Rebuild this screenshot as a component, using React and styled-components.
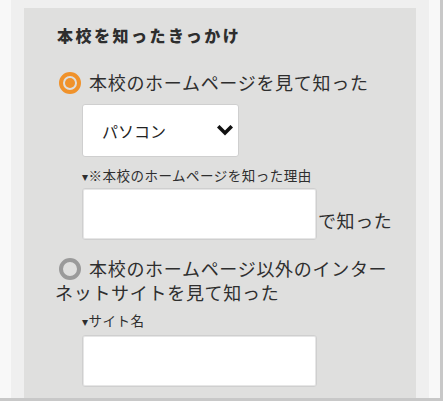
import styled, { createGlobalStyle } from 'styled-components';

const GlobalStyle = createGlobalStyle`
    body {
        margin: 0;
        background: #ffffff;
        font-family: "Noto Sans CJK JP", "Noto Sans", sans-serif;
        color: #333333;
    }
`;

const Sheet = styled.div`
    width: 440px;
    height: 398px;
    background-color: #f8f8f8;
    border-right: 3px solid #c8c8c8;
    border-bottom: 3px solid #c8c8c8;
    overflow: hidden;
`;

const Column = styled.div`
    margin-left: 11px;
    width: 392px;
    height: 100%;
    padding: 8px 13px 0;
    background-color: #efefef;
`;

const Panel = styled.section`
    height: 100%;
    padding: 15px 20px 0 33px;
    background-color: #dfdfde;
    box-sizing: border-box;
`;

const Title = styled.h3`
    margin: 0;
    font-size: 16px;
    font-weight: 900;
    line-height: 24px;
    letter-spacing: 2.5px;
    color: #2e2e2e;
`;

const Option = styled.label`
    display: block;
    margin: ${(p) => p.$top}px 0 0 -2px;
    font-size: 18px;
    line-height: 24px;
    letter-spacing: 0.7px;
    color: #2e2e2e;
    cursor: pointer;
`;

const Radio = styled.span`
    display: inline-block;
    width: 22px;
    height: 22px;
    margin: 0 8px 0 4px;
    box-sizing: border-box;
    border-radius: 50%;
    border: 4px solid ${(p) => (p.$checked ? '#f0922b' : '#9a9a9a')};
    vertical-align: -4px;
    position: relative;
    &::after {
        content: '';
        display: ${(p) => (p.$checked ? 'block' : 'none')};
        position: absolute;
        left: 2px;
        top: 2px;
        width: 10px;
        height: 10px;
        border-radius: 50%;
        background-color: #f0922b;
    }
`;

const Indent = styled.div`
    margin-left: 25px;
`;

const SelectWrap = styled.div`
    position: relative;
    width: 157px;
    margin-top: ${(p) => p.$top}px;
`;

const Select = styled.select`
    appearance: none;
    display: block;
    width: 100%;
    height: 53px;
    padding: 0 30px 0 19px;
    font-family: inherit;
    font-size: 16px;
    color: #222222;
    background-color: #ffffff;
    border: 1px solid #cfcfcf;
    border-radius: 3px;
    outline: none;
`;

const Chevron = styled.svg`
    position: absolute;
    right: 6px;
    top: 21px;
    width: 16px;
    height: 12px;
    pointer-events: none;
`;

const Note = styled.p`
    margin: ${(p) => p.$top}px 0 0;
    font-size: 13.5px;
    line-height: 18px;
    letter-spacing: 0.5px;
    color: #2e2e2e;
    &::before {
        content: '▾';
        font-size: 12px;
    }
`;

const FieldRow = styled.div`
    display: flex;
    align-items: flex-end;
    margin-top: ${(p) => p.$top}px;
`;

const TextInput = styled.input`
    width: 235px;
    height: 52px;
    box-sizing: border-box;
    padding: 0 10px;
    font-family: inherit;
    font-size: 16px;
    background-color: #ffffff;
    border: 1px solid #cfcfcf;
    border-radius: 3px;
    box-shadow: inset 0 0 0 1px #e6e6e6;
    outline: none;
`;

const Suffix = styled.span`
    margin: 0 0 8px 1px;
    font-size: 18px;
    line-height: 24px;
    letter-spacing: 0.6px;
    color: #2e2e2e;
`;

const App = () => {
    return (
        <>
            <GlobalStyle />
            <Sheet>
                <Column>
                    <Panel>
                        <Title>本校を知ったきっかけ</Title>
                        <Option $top={23}>
                            <Radio $checked />本校のホームページを見て知った
                        </Option>
                        <Indent>
                            <SelectWrap $top={10}>
                                <Select defaultValue="pc">
                                    <option value="pc">パソコン</option>
                                    <option value="sp">スマートフォン</option>
                                </Select>
                                <Chevron viewBox="0 0 16 12">
                                    <polyline
                                        points="2.5,2.5 8,8 13.5,2.5"
                                        fill="none"
                                        stroke="#111"
                                        strokeWidth="3.6"
                                        strokeLinecap="square"
                                    />
                                </Chevron>
                            </SelectWrap>
                            <Note $top={9}>※本校のホームページを知った理由</Note>
                            <FieldRow $top={3}>
                                <TextInput type="text" />
                                <Suffix>で知った</Suffix>
                            </FieldRow>
                        </Indent>
                        <Option $top={16}>
                            <Radio />本校のホームページ以外のインターネットサイトを見て知った
                        </Option>
                        <Indent>
                            <Note $top={7}>サイト名</Note>
                            <FieldRow $top={5}>
                                <TextInput type="text" />
                            </FieldRow>
                        </Indent>
                    </Panel>
                </Column>
            </Sheet>
        </>
    );
};

export default App;
